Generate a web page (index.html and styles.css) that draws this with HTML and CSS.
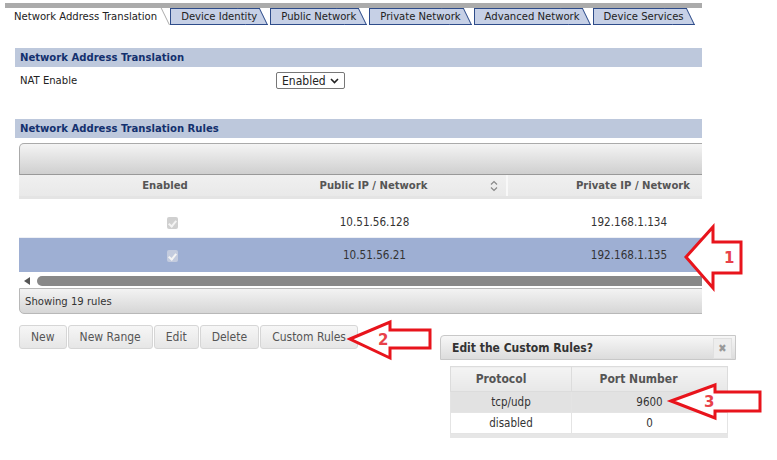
FILE: index.html
```html
<!DOCTYPE html>
<html lang="en">

<head>
  <meta charset="UTF-8">
  <title>NAT</title>
  <link rel="stylesheet" href="styles.css">
</head>

<body>
  <div class="page">
    <div class="tabs">
      <div class="tab active"><span>Network Address Translation</span></div>
      <div class="tab"><span>Device Identity</span></div>
      <div class="tab"><span>Public Network</span></div>
      <div class="tab"><span>Private Network</span></div>
      <div class="tab"><span>Advanced Network</span></div>
      <div class="tab"><span>Device Services</span></div>
    </div>

    <div class="content">
      <div class="section-head">Network Address Translation</div>
      <div class="field-row">
        <label class="field-label" for="nat-enable">NAT Enable</label>
        <span class="select-wrap">
          <select id="nat-enable" class="select">
            <option>Enabled</option>
            <option>Disabled</option>
          </select>
          <svg class="select-arrow" width="9" height="6" viewBox="0 0 9 6">
            <path d="M1 1 L4.5 4.5 L8 1" fill="none" stroke="#222" stroke-width="1.6" />
          </svg>
        </span>
      </div>

      <div class="section-head">Network Address Translation Rules</div>
      <div class="grid">
        <div class="grid-caption"></div>
        <div class="grid-header">
          <div class="cell col-enabled">Enabled</div>
          <div class="cell col-public">
            Public IP / Network
            <svg class="sort-icon" width="8" height="12" viewBox="0 0 8 12">
              <path d="M1 4.5 L4 1.5 L7 4.5 M1 7.5 L4 10.5 L7 7.5" fill="none" stroke="#888" stroke-width="1.2" />
            </svg>
          </div>
          <div class="cell col-private">Private IP / Network</div>
        </div>
        <div class="grid-band"></div>
        <div class="grid-row first">
          <div class="cell col-enabled"><span class="check"></span></div>
          <div class="cell col-public">10.51.56.128</div>
          <div class="cell col-private">192.168.1.134</div>
        </div>
        <div class="grid-row selected">
          <div class="cell col-enabled"><span class="check"></span></div>
          <div class="cell col-public">10.51.56.21</div>
          <div class="cell col-private">192.168.1.135</div>
        </div>
        <div class="grid-scroll">
          <span class="scroll-left"></span>
          <span class="scroll-thumb"></span>
        </div>
        <div class="grid-footer">Showing 19 rules</div>
      </div>

      <div class="buttons">
        <button class="btn">New</button>
        <button class="btn">New Range</button>
        <button class="btn">Edit</button>
        <button class="btn">Delete</button>
        <button class="btn">Custom Rules</button>
      </div>
    </div>

    <div class="dialog">
      <div class="dialog-title">
        Edit the Custom Rules?
        <span class="dialog-close">&#x2716;</span>
      </div>
      <table class="rules">
        <thead>
          <tr><th class="c-proto">Protocol</th><th class="c-port">Port Number</th></tr>
        </thead>
        <tbody>
          <tr class="alt"><td>tcp/udp</td><td>9600</td></tr>
          <tr><td>disabled</td><td>0</td></tr>
        </tbody>
      </table>
      <div class="rules-foot"></div>
    </div>

    <svg class="callouts" width="777" height="460" viewBox="0 0 777 460">
      <g fill="#fff" stroke="#e8141c" stroke-width="3" stroke-linejoin="miter">
        <polygon points="686,257 713,227 713,242 741,242 741,273 713,273 713,288" />
        <polygon points="350,339 390,322 390,330 430,330 430,348 390,348 390,358" />
        <polygon points="671,401 715,385 715,392 760,392 760,411 715,411 715,418" />
      </g>
      <g class="callout-num">
        <text x="724" y="263">1</text>
        <text x="378" y="345">2</text>
        <text x="704" y="407">3</text>
      </g>
    </svg>
  </div>
</body>

</html>
```

FILE: styles.css
```css
body {
  margin: 0;
  font-family: "DejaVu Sans Condensed", "DejaVu Sans", sans-serif;
  font-size: 11px;
  color: #333;
  background: #fff;
}

.page {
  position: relative;
  width: 777px;
  height: 460px;
  overflow: hidden;
}

/* tabs */

.tabs {
  display: flex;
  margin: 3px 0 0 5px;
  width: 697px;
  border-top: 5px solid #ababab;
  height: 17px;
}

.tab {
  position: relative;
  height: 17px;
  margin-right: 2px;
  padding: 1px 11px 0 11px;
  box-sizing: border-box;
  line-height: 16px;
  font-size: 11.2px;
  color: #222;
  white-space: nowrap;
}

.tab span {
  position: relative;
  z-index: 1;
}

.tab::before,
.tab::after {
  content: '';
  position: absolute;
  top: 0;
  bottom: 0;
  box-sizing: border-box;
  background: #c6d0e6;
  border-top: 1px solid #2e4c8a;
  border-bottom: 1px solid #2e4c8a;
}

.tab::before {
  left: 0;
  right: 12px;
  border-left: 1px solid #2e4c8a;
}

.tab::after {
  right: 0;
  width: 22px;
  border-right: 1px solid #2e4c8a;
  transform: skewX(26deg);
  transform-origin: bottom right;
}

.tab.active {
  margin-right: 0;
  padding-left: 9px;
  padding-right: 13px;
}

.tab.active::before,
.tab.active::after {
  background: #fff;
  border-top: none;
  border-bottom: none;
  border-left: none;
}

.tab.active::after {
  border-right: 1px solid #ababab;
}

/* content */

.content {
  width: 687px;
  margin: 23px 0 0 15px;
  overflow: hidden;
}

.section-head {
  height: 19px;
  line-height: 19px;
  padding-left: 5px;
  background: #bdc8dc;
  color: #13306e;
  font-weight: bold;
  font-size: 11.2px;
}

.field-row {
  display: flex;
  align-items: flex-start;
  height: 52px;
  padding-left: 5px;
  box-sizing: border-box;
  padding-top: 5px;
}

.field-label {
  width: 256px;
  line-height: 17px;
  font-size: 11.2px;
  color: #222;
}

.select-wrap {
  position: relative;
  display: inline-block;
}

.select {
  appearance: none;
  -webkit-appearance: none;
  width: 69px;
  height: 17px;
  padding: 0 0 0 5px;
  border: 1px solid #777;
  border-radius: 2px;
  background: #fff;
  font-family: "DejaVu Sans Condensed", "DejaVu Sans", sans-serif;
  font-size: 12px;
  color: #222;
}

.select-arrow {
  position: absolute;
  right: 6px;
  top: 6px;
}

/* grid */

.grid {
  width: 760px;
  margin: 5px 0 0 4px;
}

.grid-caption {
  height: 32px;
  box-sizing: border-box;
  border: 1px solid #aaa;
  border-bottom-color: #999;
  border-radius: 5px 0 0 0;
  background: linear-gradient(#f4f4f4, #cfcfcf);
}

.grid-header,
.grid-row {
  display: flex;
}

.grid-header {
  height: 21px;
  line-height: 21px;
  background: linear-gradient(#f0f0f0, #e9e9e9);
  font-weight: bold;
  color: #555;
  font-size: 11.2px;
}

.grid-band {
  height: 3px;
  background: #e4e4e4;
}

.cell {
  position: relative;
  box-sizing: border-box;
  text-align: center;
}

.col-enabled {
  width: 292px;
}

.col-public {
  width: 197px;
  padding-right: 70px;
}

.col-private {
  width: 242px;
}

.grid-header .col-public {
  border-right: 2px solid #f8f8f8;
}

.grid-header .col-private {
  padding-left: 8px;
}

.sort-icon {
  position: absolute;
  right: 8px;
  top: 5px;
}

.grid-row {
  font-size: 11.6px;
  color: #333;
}

.grid-row.first {
  height: 39px;
  line-height: 39px;
  padding-top: 4px;
  box-sizing: border-box;
  border-bottom: 1px solid #eef0f5;
}

.grid-row.selected {
  height: 34px;
  line-height: 34px;
  background: #9eafd3;
}

.grid-row .col-enabled {
  padding-left: 14px;
}

.check {
  display: inline-block;
  width: 11px;
  height: 12px;
  border-radius: 2px;
  background: #d0d0d0;
  vertical-align: middle;
  position: relative;
}

.check::after {
  content: '';
  position: absolute;
  left: 3px;
  top: 2px;
  width: 3px;
  height: 6px;
  border: solid #f4f4f4;
  border-width: 0 2px 2px 0;
  transform: rotate(40deg);
}

.selected .check {
  background: #c3cbde;
}

.grid-scroll {
  display: flex;
  align-items: center;
  height: 11px;
  margin-top: 3px;
}

.scroll-left {
  width: 0;
  height: 0;
  margin: 0 7px 0 5px;
  border-top: 4px solid transparent;
  border-bottom: 4px solid transparent;
  border-right: 6px solid #555;
}

.scroll-thumb {
  flex: 1;
  height: 10px;
  border-radius: 5px 0 0 5px;
  background: #888;
}

.grid-footer {
  height: 26px;
  line-height: 26px;
  margin-top: 2px;
  padding-left: 5px;
  box-sizing: border-box;
  border: 1px solid #b8b8b8;
  border-radius: 0 0 0 5px;
  background: linear-gradient(#f3f3f3, #d6d6d6);
  font-size: 11.2px;
  color: #333;
}

/* buttons */

.buttons {
  display: flex;
  gap: 1px;
  margin: 11px 0 0 4px;
}

.btn {
  height: 24px;
  margin: 0;
  padding: 0 11px;
  border: 1px solid #d6d6d6;
  border-radius: 3px;
  background: linear-gradient(#f6f6f6, #e6e6e6);
  font-family: "DejaVu Sans Condensed", "DejaVu Sans", sans-serif;
  font-size: 12px;
  color: #555;
}

/* dialog */

.dialog {
  position: absolute;
  left: 440px;
  top: 335px;
  width: 296px;
}

.dialog-title {
  position: relative;
  height: 25px;
  line-height: 25px;
  box-sizing: border-box;
  padding-left: 11px;
  border: 1px solid #c8c8c8;
  border-radius: 4px 0 0 0;
  background: linear-gradient(#f7f7f7, #dcdcdc);
  font-weight: bold;
  font-size: 12px;
  color: #333;
}

.dialog-close {
  position: absolute;
  right: 3px;
  top: 2px;
  width: 17px;
  height: 19px;
  line-height: 19px;
  text-align: center;
  background: #ededed;
  border: 1px solid #e0e0e0;
  font-size: 11px;
  color: #999;
}

.rules {
  margin: 6px 0 0 10px;
  width: 278px;
  border-collapse: collapse;
  font-size: 11.5px;
}

.rules th {
  height: 24px;
  padding: 0;
  background: linear-gradient(#f4f4f4, #e8e8e8);
  border: 1px solid #dcdcdc;
  color: #555;
  font-weight: bold;
  font-size: 12px;
}

.rules .c-proto {
  width: 100px;
  padding-right: 20px;
}

.rules .c-port {
  padding-right: 22px;
}

.rules td {
  height: 20px;
  padding: 0;
  text-align: center;
  border: 1px solid #e4e4e4;
  color: #333;
}

.rules tr.alt td {
  background: #e2e2e2;
}

.rules-foot {
  margin-left: 10px;
  width: 278px;
  height: 4px;
  background: #e6e6e6;
}

/* annotations */

.callouts {
  position: absolute;
  left: 0;
  top: 0;
  pointer-events: none;
}

.callout-num text {
  font-family: "DejaVu Sans", sans-serif;
  font-weight: bold;
  font-size: 15px;
  fill: #e8414a;
}
```
